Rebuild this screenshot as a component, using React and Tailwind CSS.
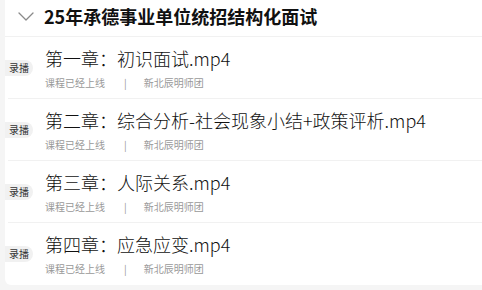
import React from "react";

const chapters = [
  "第一章：初识面试.mp4",
  "第二章：综合分析-社会现象小结+政策评析.mp4",
  "第三章：人际关系.mp4",
  "第四章：应急应变.mp4",
];

function Chevron() {
  return (
    <svg width="16" height="9" viewBox="0 0 16 9" fill="none" className="shrink-0">
      <path d="M1 1l7 7 7-7" stroke="#8a8a8a" strokeWidth="1.3" strokeLinecap="round" strokeLinejoin="round" />
    </svg>
  );
}

function LessonRow({ title, last }) {
  return (
    <div className={`relative flex h-[62px] items-center ${last ? "" : "after:absolute after:bottom-0 after:left-[3px] after:right-0 after:h-px after:bg-[#f1f1f1]"}`}>
      <span className="flex h-[16px] w-[28px] shrink-0 items-center justify-center rounded-r-[8px] bg-[#f1f1f1] text-[10px] leading-none text-[#333]">
        录播
      </span>
      <div className="ml-[12px] flex flex-col">
        <div className="text-[18px] font-light leading-[24px] text-[#111] whitespace-nowrap">{title}</div>
        <div className="mt-[6px] flex items-center text-[10px] leading-[14px] text-[#999]">
          <span>课程已经上线</span>
          <span className="ml-[19px]">|</span>
          <span className="ml-[17px]">新北辰明师团</span>
        </div>
      </div>
    </div>
  );
}

export default function App() {
  return (
    <div
      className="h-[290px] w-[482px] overflow-hidden bg-[#f5f5f5] pl-[5px]"
      style={{ fontFamily: '"Noto Sans CJK SC", "Noto Sans", sans-serif' }}
    >
      <div className="rounded-bl-[6px] bg-white">
        <div className="flex h-[37px] items-center border-b border-[#f1f1f1] pb-[4px] pl-[13px]">
          <Chevron />
          <div className="ml-[10px] text-[18px] font-bold leading-[24px] text-[#111] whitespace-nowrap">
            25年承德事业单位统招结构化面试
          </div>
        </div>
        {chapters.map((t, i) => (
          <LessonRow key={i} title={t} last={i === chapters.length - 1} />
        ))}
      </div>
    </div>
  );
}
